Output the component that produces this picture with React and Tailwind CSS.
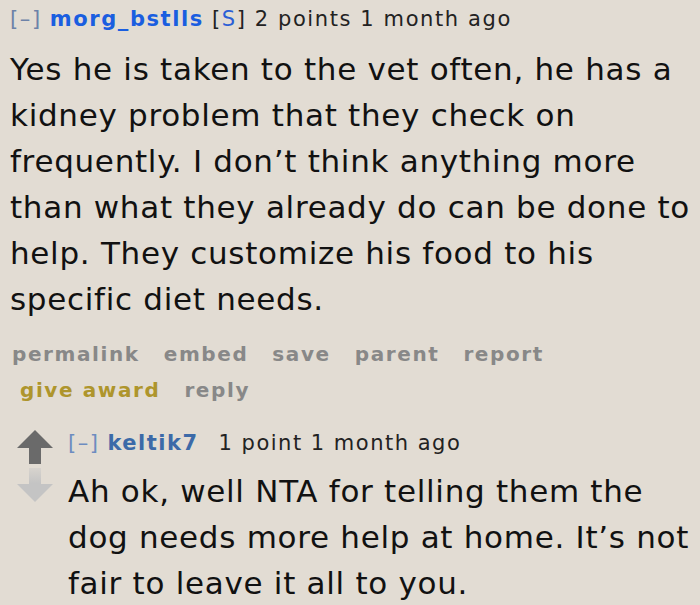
import React from 'react';

function Arrow({ down, color }) {
  return (
    <svg width="38" height="34" viewBox="0 0 38 34" className="block">
      {down ? (
        <>
          <defs>
            <linearGradient id="downvoteFade" x1="0" y1="0" x2="0" y2="1">
              <stop offset="0" stopColor={color} stopOpacity="0.35" />
              <stop offset="0.45" stopColor={color} stopOpacity="1" />
            </linearGradient>
          </defs>
          <path d="M13 0 H25 V16 H37 L19 34 L1 16 H13 Z" fill="url(#downvoteFade)" />
        </>
      ) : (
        <path d="M19 0 L37 18 H25 V34 H13 V18 H1 Z" fill={color} />
      )}
    </svg>
  );
}

const firstBody = [
  'Yes he is taken to the vet often, he has a',
  'kidney problem that they check on',
  'frequently. I don’t think anything more',
  'than what they already do can be done to',
  'help. They customize his food to his',
  'specific diet needs.',
];

const replyBody = [
  'Ah ok, well NTA for telling them the',
  'dog needs more help at home. It’s not',
  'fair to leave it all to you.',
];

export default function App() {
  const font = { fontFamily: '"DejaVu Sans", Verdana, sans-serif' };
  return (
    <div className="w-[700px] h-[605px] overflow-hidden bg-[#e2dcd3] text-[#111]" style={font}>
      <div className="pl-[10px] pt-[5px]">
        <div className="text-[21px] tracking-[1.6px] leading-[28px] flex gap-[8px] items-baseline">
          <span className="text-[#6d82a8]">[–]</span>
          <span className="font-bold text-[#1a5ee0]">morg_bstlls</span>
          <span className="text-[#222]">
            [<span className="text-[#2b5fd6]">S</span>] 2 points 1 month ago
          </span>
        </div>
        <p className="text-[31px] tracking-[0.7px] leading-[46px] mt-[13px]">
          {firstBody.map((l) => (
            <span key={l} className="block whitespace-nowrap">{l}</span>
          ))}
        </p>
        <div className="mt-[14px] text-[20px] tracking-[1.6px] font-bold leading-[36px] text-[#888]">
          <div className="flex gap-[24px] pl-[2px]">
            <span>permalink</span>
            <span>embed</span>
            <span>save</span>
            <span>parent</span>
            <span>report</span>
          </div>
          <div className="flex gap-[24px] pl-[10px]">
            <span className="text-[#ae952c]">give award</span>
            <span>reply</span>
          </div>
        </div>
      </div>
      <div className="flex mt-[21px] pl-[16px]">
        <div className="flex flex-col gap-[4px] pt-[1px] w-[52px]">
          <Arrow color="#6a6a6a" />
          <Arrow down color="#c4c4c4" />
        </div>
        <div>
          <div className="text-[21px] tracking-[1.5px] leading-[28px] flex gap-[8px] items-baseline">
            <span className="text-[#6d8cc0]">[–]</span>
            <span className="font-bold text-[#3c6aa8]">keltik7</span>
            <span className="text-[#222] ml-[12px]">1 point 1 month ago</span>
          </div>
          <p className="text-[31px] tracking-[0.7px] leading-[46px] mt-[11px]">
            {replyBody.map((l) => (
              <span key={l} className="block whitespace-nowrap">{l}</span>
            ))}
          </p>
        </div>
      </div>
    </div>
  );
}
